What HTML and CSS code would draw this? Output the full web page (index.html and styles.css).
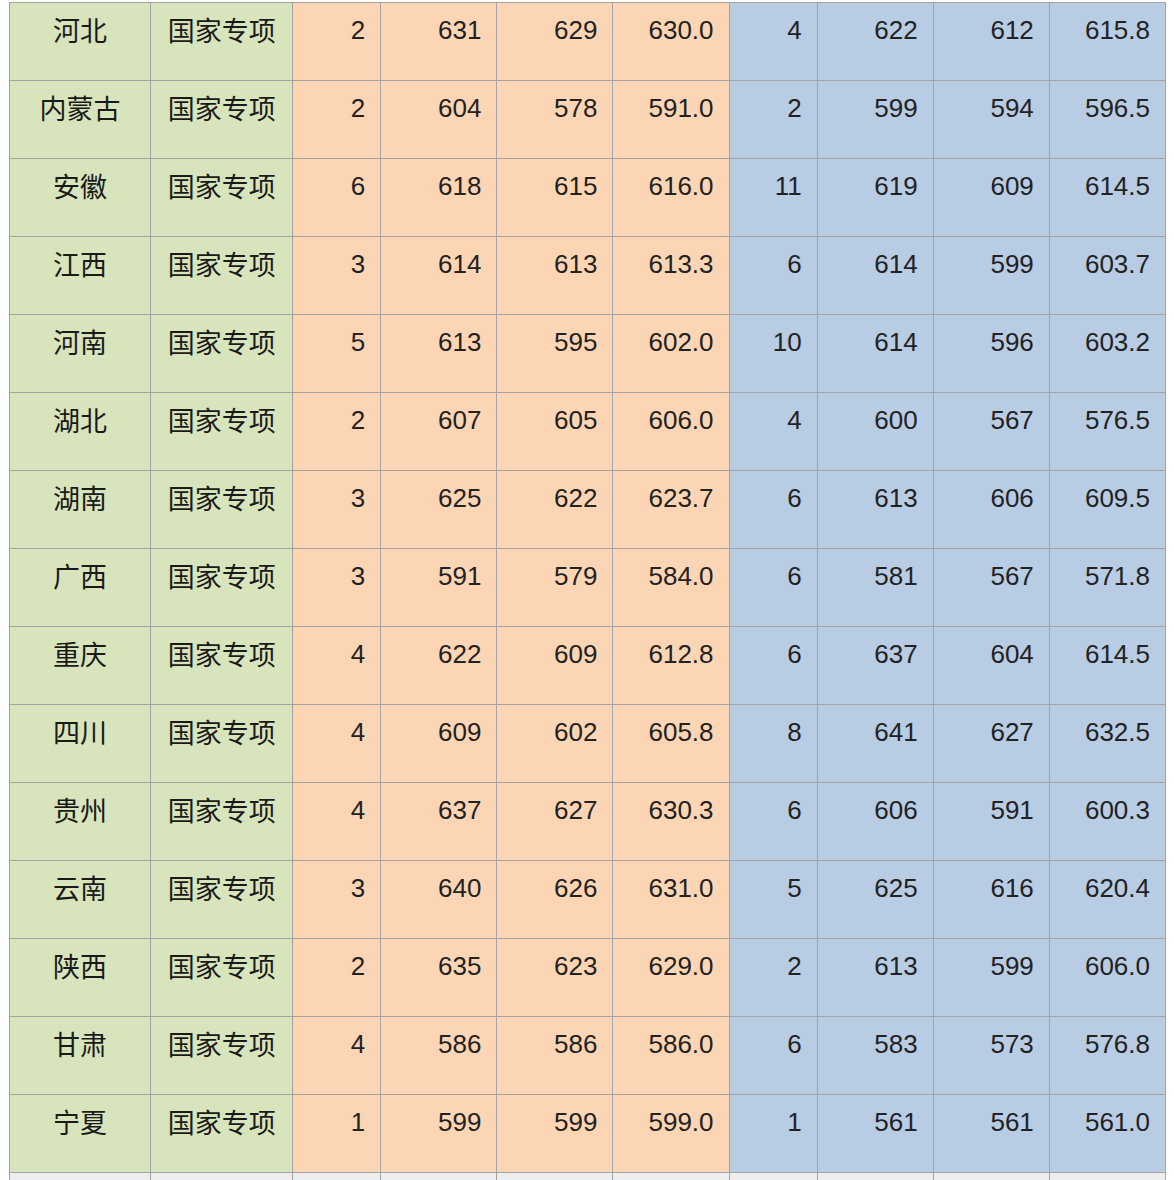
FILE: index.html
```html
<!DOCTYPE html>
<html lang="zh-CN">
<head>
<meta charset="utf-8">
<title>国家专项录取分数</title>
<link rel="stylesheet" href="styles.css">
</head>
<body>
<table class="scores">
  <colgroup>
    <col class="c-prov"><col class="c-type">
    <col class="c-cnt"><col class="c-num"><col class="c-num"><col class="c-num">
    <col class="c-cnt"><col class="c-num"><col class="c-num"><col class="c-num">
  </colgroup>
  <tbody>
    <tr><td class="g cn">河北</td><td class="g cn">国家专项</td><td class="o">2</td><td class="o">631</td><td class="o">629</td><td class="o">630.0</td><td class="b">4</td><td class="b">622</td><td class="b">612</td><td class="b">615.8</td></tr>
    <tr><td class="g cn">内蒙古</td><td class="g cn">国家专项</td><td class="o">2</td><td class="o">604</td><td class="o">578</td><td class="o">591.0</td><td class="b">2</td><td class="b">599</td><td class="b">594</td><td class="b">596.5</td></tr>
    <tr><td class="g cn">安徽</td><td class="g cn">国家专项</td><td class="o">6</td><td class="o">618</td><td class="o">615</td><td class="o">616.0</td><td class="b">11</td><td class="b">619</td><td class="b">609</td><td class="b">614.5</td></tr>
    <tr><td class="g cn">江西</td><td class="g cn">国家专项</td><td class="o">3</td><td class="o">614</td><td class="o">613</td><td class="o">613.3</td><td class="b">6</td><td class="b">614</td><td class="b">599</td><td class="b">603.7</td></tr>
    <tr><td class="g cn">河南</td><td class="g cn">国家专项</td><td class="o">5</td><td class="o">613</td><td class="o">595</td><td class="o">602.0</td><td class="b">10</td><td class="b">614</td><td class="b">596</td><td class="b">603.2</td></tr>
    <tr><td class="g cn">湖北</td><td class="g cn">国家专项</td><td class="o">2</td><td class="o">607</td><td class="o">605</td><td class="o">606.0</td><td class="b">4</td><td class="b">600</td><td class="b">567</td><td class="b">576.5</td></tr>
    <tr><td class="g cn">湖南</td><td class="g cn">国家专项</td><td class="o">3</td><td class="o">625</td><td class="o">622</td><td class="o">623.7</td><td class="b">6</td><td class="b">613</td><td class="b">606</td><td class="b">609.5</td></tr>
    <tr><td class="g cn">广西</td><td class="g cn">国家专项</td><td class="o">3</td><td class="o">591</td><td class="o">579</td><td class="o">584.0</td><td class="b">6</td><td class="b">581</td><td class="b">567</td><td class="b">571.8</td></tr>
    <tr><td class="g cn">重庆</td><td class="g cn">国家专项</td><td class="o">4</td><td class="o">622</td><td class="o">609</td><td class="o">612.8</td><td class="b">6</td><td class="b">637</td><td class="b">604</td><td class="b">614.5</td></tr>
    <tr><td class="g cn">四川</td><td class="g cn">国家专项</td><td class="o">4</td><td class="o">609</td><td class="o">602</td><td class="o">605.8</td><td class="b">8</td><td class="b">641</td><td class="b">627</td><td class="b">632.5</td></tr>
    <tr><td class="g cn">贵州</td><td class="g cn">国家专项</td><td class="o">4</td><td class="o">637</td><td class="o">627</td><td class="o">630.3</td><td class="b">6</td><td class="b">606</td><td class="b">591</td><td class="b">600.3</td></tr>
    <tr><td class="g cn">云南</td><td class="g cn">国家专项</td><td class="o">3</td><td class="o">640</td><td class="o">626</td><td class="o">631.0</td><td class="b">5</td><td class="b">625</td><td class="b">616</td><td class="b">620.4</td></tr>
    <tr><td class="g cn">陕西</td><td class="g cn">国家专项</td><td class="o">2</td><td class="o">635</td><td class="o">623</td><td class="o">629.0</td><td class="b">2</td><td class="b">613</td><td class="b">599</td><td class="b">606.0</td></tr>
    <tr><td class="g cn">甘肃</td><td class="g cn">国家专项</td><td class="o">4</td><td class="o">586</td><td class="o">586</td><td class="o">586.0</td><td class="b">6</td><td class="b">583</td><td class="b">573</td><td class="b">576.8</td></tr>
    <tr><td class="g cn">宁夏</td><td class="g cn">国家专项</td><td class="o">1</td><td class="o">599</td><td class="o">599</td><td class="o">599.0</td><td class="b">1</td><td class="b">561</td><td class="b">561</td><td class="b">561.0</td></tr>
    <tr class="next"><td></td><td></td><td></td><td></td><td></td><td></td><td></td><td></td><td></td><td></td></tr>
  </tbody>
</table>
</body>
</html>
```

FILE: styles.css
```css
html, body {
  margin: 0;
  padding: 0;
  background: #ffffff;
}
body {
  padding: 2px 0 0 9px;
}
.scores {
  border-collapse: collapse;
  table-layout: fixed;
  width: 1157px;
  font-family: "Liberation Sans", Arial, "Noto Sans CJK SC", sans-serif;
  font-size: 26px;
  color: #222222;
}
.c-prov { width: 141px; }
.c-type { width: 142px; }
.c-cnt { width: 88px; }
.c-num { width: 116px; }
.scores tr { height: 78px; }
.scores td {
  border: 1px solid #a3a3a3;
  padding: 7px 15px 0 0;
  vertical-align: top;
  line-height: 40px;
  text-align: right;
  white-space: nowrap;
  overflow: hidden;
}
.scores td.cn {
  font-family: "Noto Sans CJK SC", sans-serif;
  font-size: 27px;
  text-align: center;
  padding-right: 0;
  color: #1a1a1a;
}
.g { background: #d8e4bc; }
.o { background: #fcd5b4; }
.b { background: #b8cce4; }
.scores tr.next { height: 7px; }
.scores tr.next td {
  background: #eeeeee;
  padding: 0;
  line-height: 0;
  border-bottom: 0;
}
```
